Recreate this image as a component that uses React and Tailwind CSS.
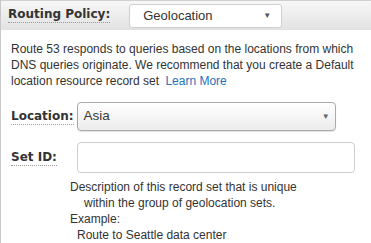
export default function App() {
  const label = "font-['DejaVu_Sans',sans-serif] font-bold text-[12px] text-[#333] border-b border-dotted border-[#999] leading-[15px]";
  return (
    <div className="w-[371px] h-[243px] overflow-hidden bg-white border-l border-[#c8c8c8] font-['Liberation_Sans',Arial,sans-serif] text-[12px] text-[#333]">
      <div className="h-[30px] flex items-center border-t border-[#d0d0d0] border-b border-b-[#e0e0e0] bg-gradient-to-b from-[#f7f7f7] to-[#e3e3e3] pl-[7px]">
        <span className={label}>Routing Policy:</span>
        <div className="ml-[19px] w-[153px] h-[24px] mt-[2px] bg-white border border-[#cfcfcf] rounded-[3px] flex items-center justify-between pl-[13px] pr-[10px] text-[13px] text-[#333]">
          <span>Geolocation</span>
          <span className="text-[8px] text-[#555]">▼</span>
        </div>
      </div>
      <div className="pl-[10px] pr-[4px] pt-[11px] leading-[16px] text-[12px]">
        Route 53 responds to queries based on the locations from which DNS queries originate. We recommend that you create a Default location resource record set <span className="text-[#1e73be] ml-[3px]">Learn More</span>
      </div>
      <div className="flex items-center mt-[13px] pl-[10px]">
        <span className={label}>Location:</span>
        <div className="ml-[3px] w-[259px] h-[29px] rounded-[4px] border border-[#aaa] bg-gradient-to-b from-white to-[#ececec] shadow-[0_1px_1px_rgba(0,0,0,0.12)] flex items-center justify-between pl-[6px] pr-[5px] text-[13.5px]">
          <span className="text-[#3a3a3a]">Asia</span>
          <span className="text-[8px] text-[#666]">▼</span>
        </div>
      </div>
      <div className="flex items-center mt-[11px] pl-[10px]">
        <span className={label}>Set ID:</span>
        <div className="ml-[20px] w-[278px] h-[31px] rounded-[4px] border border-[#ccc] bg-white" />
      </div>
      <div className="pl-[69px] pt-[6px] leading-[16px] text-[12px]">
        <div>Description of this record set that is unique</div>
        <div className="pl-[14px]">within the group of geolocation sets.</div>
        <div>Example:</div>
        <div className="pl-[7px]">Route to Seattle data center</div>
      </div>
    </div>
  );
}
